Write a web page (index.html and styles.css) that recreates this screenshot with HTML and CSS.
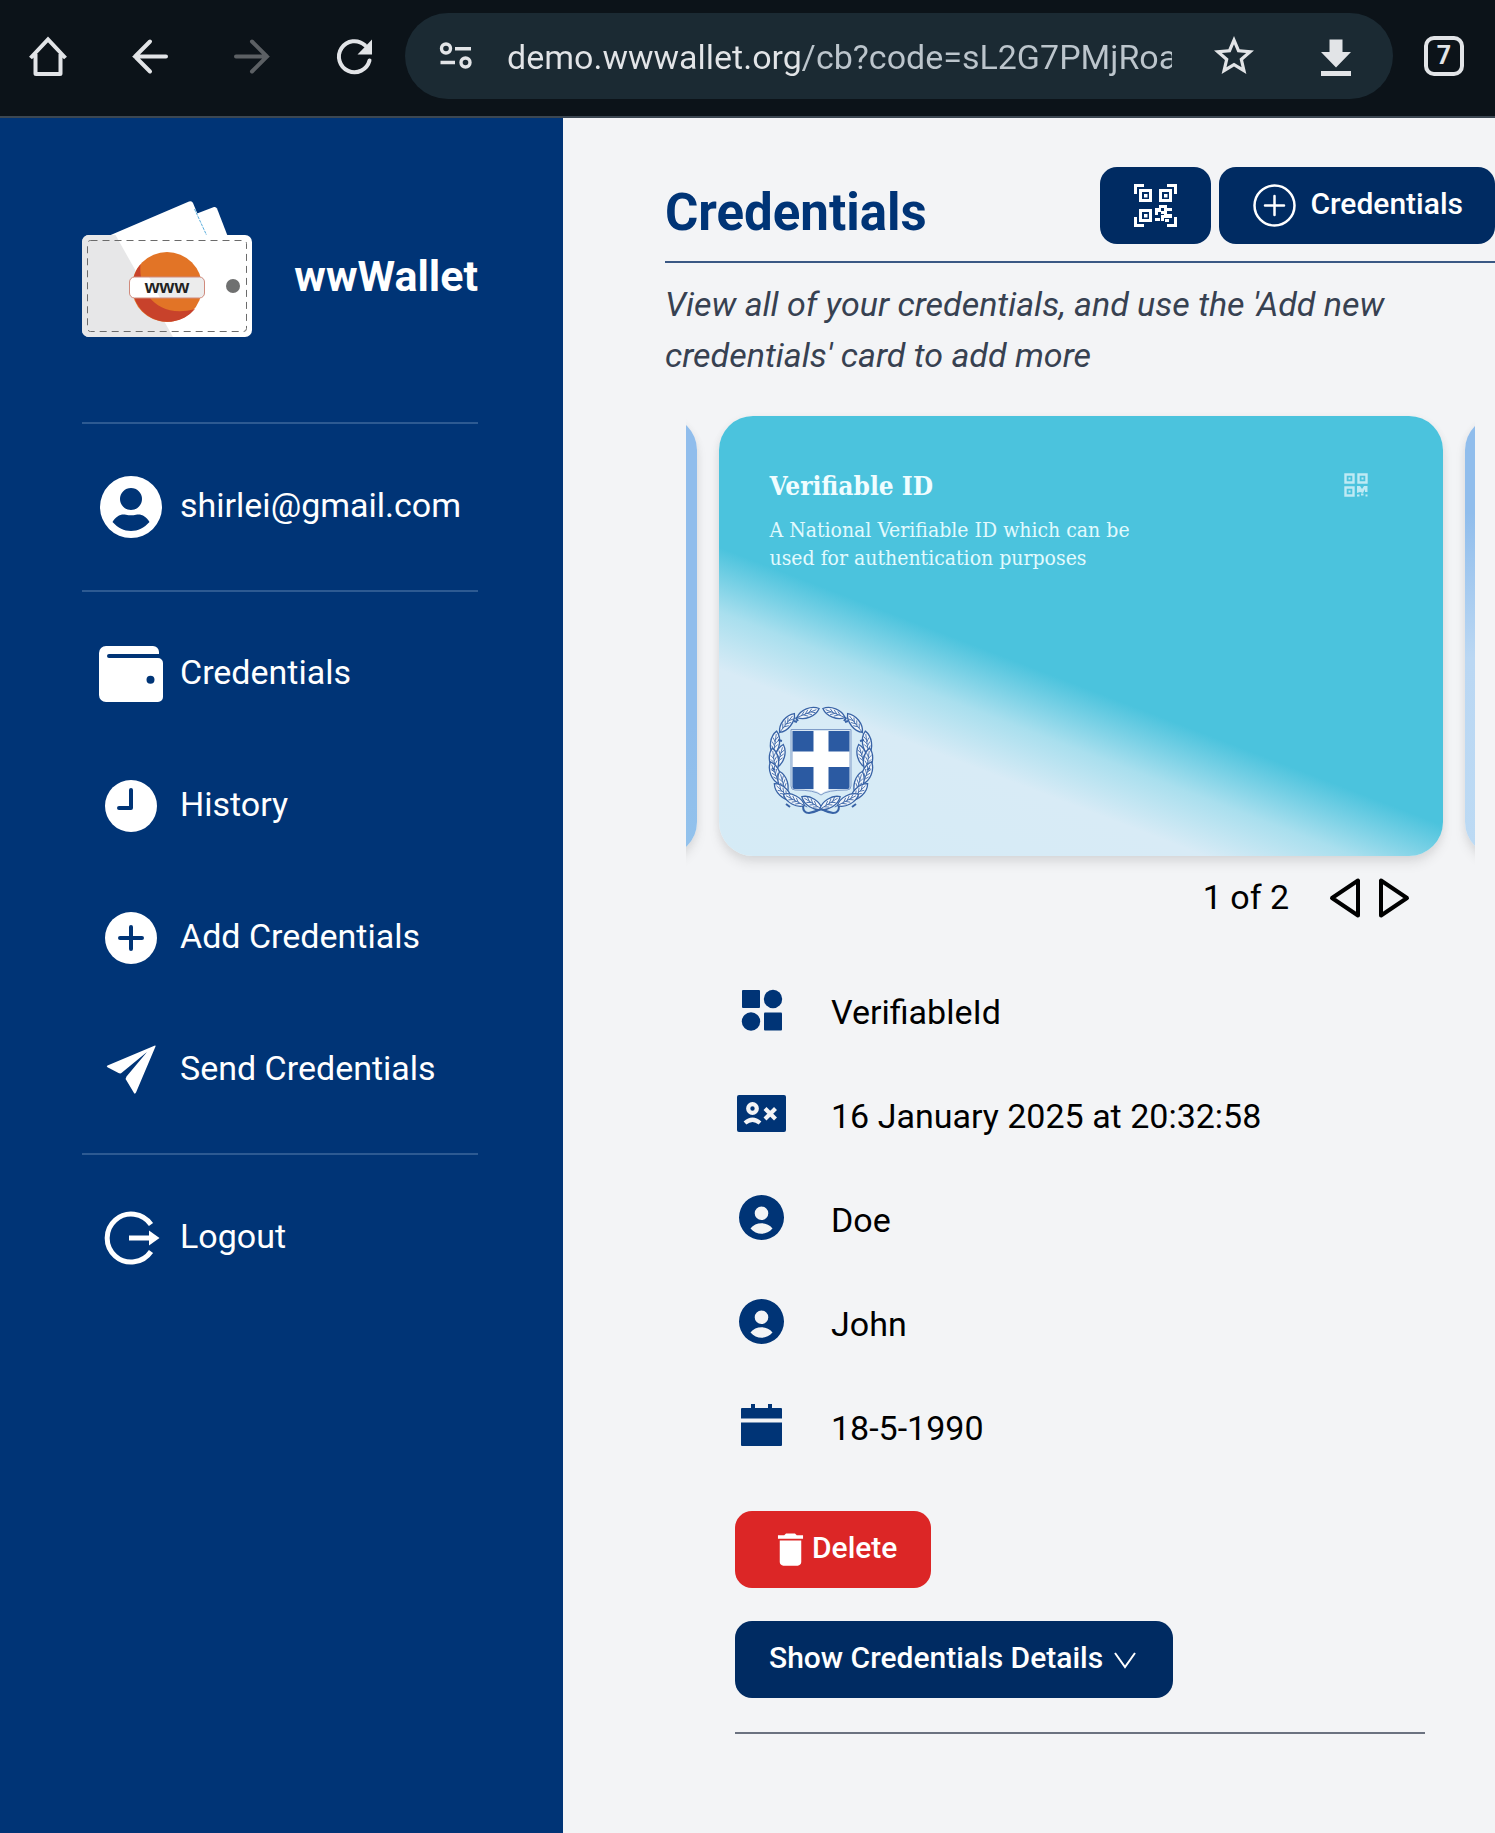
FILE: index.html
```html
<!DOCTYPE html>
<html lang="en">
<head>
<meta charset="utf-8">
<meta name="viewport" content="width=device-width, initial-scale=1">
<title>wwWallet</title>
<link rel="stylesheet" href="styles.css">
</head>
<body>
<header class="browser">
  <button class="tool" aria-label="Home"><svg viewBox="0 0 48 48" class="line"><path d="M6.500 26 24 7.500 41.500 26M11.500 22v19.500q0 .5.5.5h24q.5 0 .5-.5V22"/></svg></button>
  <button class="tool" aria-label="Back"><svg viewBox="0 0 48 48" class="line round"><path d="M40 24.500H9M24 9.500 9 24.500l15 15"/></svg></button>
  <button class="tool dim" aria-label="Forward" disabled><svg viewBox="0 0 48 48" class="line round"><path d="M8 24.500h31M24 9.500l15 15-15 15"/></svg></button>
  <button class="tool" aria-label="Reload"><svg viewBox="0 0 48 48"><path d="M39.500 28.500A15.500 15.500 0 1 1 35 13.300" fill="none" stroke="currentColor" stroke-width="4" stroke-linecap="round"/><path d="M42 7.500v15H27.500z"/></svg></button>
  <div class="omnibox">
    <button class="tune" aria-label="Site settings"><svg viewBox="0 0 34 34"><g fill="none" stroke="currentColor" stroke-width="3.400"><circle cx="7" cy="9.500" r="4.500"/><path d="M16 9.700h16M1.500 23.500H16"/><circle cx="26.500" cy="23.500" r="4.500"/></g></svg></button>
    <input class="url" type="text" aria-label="Address" value="demo.wwwallet.org/cb?code=sL2G7PMjRoabcd">
    <button class="tool" aria-label="Bookmark"><svg viewBox="0 0 24 24"><path d="M22 9.240l-7.190-.620L12 2 9.190 8.630 2 9.240l5.460 4.730L5.820 21 12 17.270 18.180 21l-1.630-7.030L22 9.240zM12 15.400l-3.760 2.270 1-4.280-3.320-2.880 4.380-.380L12 6.100l1.710 4.040 4.380.380-3.320 2.880 1 4.280L12 15.400z"/></svg></button>
    <button class="tool" aria-label="Download"><svg viewBox="0 0 48 48"><path d="M17.500 7.500h13V20H39L24 35.500 9 20h8.500zM9 39h30v5H9z"/></svg></button>
  </div>
  <button class="tool" aria-label="Tabs"><span class="tabs">7</span></button>
</header>

<div class="shell">
  <aside class="sidebar">
    <div class="brand">
      <svg class="logo" viewBox="0 0 170 150" aria-hidden="true">
        <path fill="#fff" d="M115 12.500 132 6q2-.5 3 1.500L146 36h-30z"/>
        <path fill="#fff" d="M24 36 107 .5q3-1 4 1.500L125 36z"/>
        <path fill="none" stroke="#5aaede" d="M112.500 8 124.500 34" stroke-dasharray="3 1"/>
        <rect y="34" width="170" height="102" rx="7" fill="#fff"/>
        <path fill="#e7e7e8" d="M7 34h26.500L91 136H7a7 7 0 0 1-7-7V41a7 7 0 0 1 7-7z"/>
        <rect x="5.500" y="39.500" width="159" height="91" rx="3" fill="none" stroke="#6b6b6b" stroke-dasharray="7 5"/>
        <circle cx="85" cy="86" r="35" fill="#e27426"/>
        <path fill="#c8422b" d="M58.500 63C56 92 76 118 113 108A35 35 0 1 1 58.500 63z"/>
        <rect x="47.500" y="76" width="75" height="21" rx="5" fill="#fff"/>
        <path fill="#ececec" d="M67 76h50.500a5 5 0 0 1 5 5v11a5 5 0 0 1-5 5H78z"/>
        <rect x="47.500" y="76" width="75" height="21" rx="5" fill="none" stroke="#d08a7c"/>
        <text class="logo-text" x="85" y="92" text-anchor="middle">www</text>
        <circle cx="151" cy="85" r="7" fill="#6f7070"/>
      </svg>
      <h2 class="brand-name">wwWallet</h2>
    </div>
    <div class="group">
      <div class="item"><svg viewBox="0 0 64 64"><path fill-rule="evenodd" d="M32 1a31 31 0 1 1 0 62 31 31 0 0 1 0-62zm0 12a11 11 0 1 0 0 22 11 11 0 0 0 0-22zM13.500 47C19 53 25 56 32 56s13-3 18.500-9C47 41 42 38.500 37 39.700q-5 1.200-10 0C22 38.500 17 41 13.500 47z"/></svg><span class="label">shirlei@gmail.com</span></div>
    </div>
    <nav class="group nav">
      <a class="item" href="#credentials"><svg viewBox="0 0 64 64"><path fill-rule="evenodd" d="M7 4h47a6 6 0 0 1 6 6v2H10a2 2 0 0 0 0 4h49a5 5 0 0 1 5 5v34a5 5 0 0 1-5 5H7a7 7 0 0 1-7-7V11a7 7 0 0 1 7-7zm44.500 29.700a4 4 0 1 0 0 8 4 4 0 0 0 0-8z"/></svg><span class="label">Credentials</span></a>
      <a class="item" href="#history"><svg viewBox="0 0 64 64"><circle cx="32" cy="32" r="26"/><path class="cut" d="M32 16v18H20"/></svg><span class="label">History</span></a>
      <a class="item" href="#add"><svg viewBox="0 0 64 64"><circle cx="32" cy="32" r="26"/><path class="cut" d="M32 21v22M21 32h22"/></svg><span class="label">Add Credentials</span></a>
      <a class="item" href="#send"><svg viewBox="0 0 64 64"><path d="M56 7.500 8.500 27.500q-1.500.8 0 1.700L19.500 35q2 1 3.500-.5L48 14 27.500 38.500q-1.500 2 0 4L35 55q1 1.500 2-.5L56.500 8.500q.3-1.200-.5-1z"/></svg><span class="label">Send Credentials</span></a>
    </nav>
    <div class="group last">
      <a class="item" href="#logout"><svg viewBox="0 0 64 64"><path fill="none" stroke="currentColor" stroke-width="5" d="M52 18.500a24 24 0 1 0 0 27M30 32h22"/><path d="M50 24.500 60.500 32 50 39.500z"/></svg><span class="label">Logout</span></a>
    </div>
  </aside>

  <main class="main">
    <div class="head">
      <h1 class="title">Credentials</h1>
      <div class="actions">
        <button class="btn" aria-label="Scan QR code"><svg class="icon43" viewBox="0 0 43 43"><path fill="none" stroke="currentColor" stroke-width="3" d="M1.500 10V1.500H10M33 1.500h8.500V10M41.500 33v8.500H33M10 41.500H1.500V33M6.500 6.500h10v10h-10zM26.500 6.500h10v10h-10zM6.500 26.500h10v10h-10z"/><path d="M10 10h3.500v3.500H10zM30 10h3.500v3.500H30zM10 30h3.500v3.500H10zM21 24h4v-3h5v3h-3v4h-3v3h-3zM30 21h3v3h5v3h-5v3h5v4h-8v-4h-3v-3h3zM21 34h5v3h-5zM27 31h3v6h-3zM31 35h4v3h-4z"/></svg></button>
        <button class="btn spaced"><svg class="icon43" viewBox="0 0 43 43"><g fill="none" stroke="currentColor" stroke-width="2.500" stroke-linecap="round"><circle cx="21.500" cy="21.500" r="20"/><path d="M21.500 12v19M12 21.500h19"/></g></svg><span class="label">Credentials</span></button>
      </div>
    </div>
    <p class="intro">View all of your credentials, and use the 'Add new credentials' card to add more</p>

    <section class="carousel" aria-label="Credential cards">
      <div class="card side"></div>
      <article class="card current">
        <div class="card-top">
          <div>
            <h3 class="card-title">Verifiable ID</h3>
            <p class="card-text">A National Verifiable ID which can be<br>used for authentication purposes</p>
          </div>
          <svg class="card-qr" viewBox="0 0 24 24" aria-hidden="true"><path fill="none" stroke="currentColor" stroke-width="2.400" d="M1.500 1.500h8v8h-8zM14.500 1.500h8v8h-8zM1.500 14.500h8v8h-8z"/><path d="M4.500 4.500h2v2h-2zM17.500 4.500h2v2h-2zM4.500 17.500h2v2h-2zM13 13h3l2 3 2-3h3.500v6H21v-3l-2 4-3-1-3 1zM13 21.500h2.500v2H13zM17 20.500h2.500v2H17zM21.500 21.500h2v2h-2z"/></svg>
        </div>
        <svg class="emblem" viewBox="0 0 102 108" aria-hidden="true">
          <defs>
            <g id="leaf"><path d="M0-12C6-6 6 6 0 12-6 6-6-6 0-12z" fill="#f1f6fb" stroke="#3863a6" stroke-width="1.300"/><path d="M0-9V15M0-3l2.500-4M0 1l3-4M0 5l3-4M0-1l-2.500-4M0 3l-3-4M0 7l-3-4" fill="none" stroke="#3863a6" stroke-width=".8"/></g>
            <g id="branch">
              <use href="#leaf" transform="translate(38 7) rotate(68)"/>
              <use href="#leaf" transform="translate(17 17) rotate(38)"/>
              <use href="#leaf" transform="translate(5 37) rotate(8)"/>
              <use href="#leaf" transform="translate(10 50) rotate(16)"/>
              <use href="#leaf" transform="translate(4 54) rotate(-8)"/>
              <use href="#leaf" transform="translate(5 67) rotate(-22)"/>
              <use href="#leaf" transform="translate(13 77) rotate(-16)"/>
              <use href="#leaf" transform="translate(13 86) rotate(-46)"/>
              <use href="#leaf" transform="translate(24 94) rotate(-62)"/>
              <use href="#leaf" transform="translate(42 97) rotate(-58)"/>
              <path d="M33 100q0 7 6 7 6-1 12-4M26 12l2 3M24 15l3 1M8 34l4 1M2 62l3 2M16 98l4 3" fill="none" stroke="#3863a6" stroke-width="2"/>
            </g>
          </defs>
          <use href="#branch"/>
          <use href="#branch" transform="translate(102 0) scale(-1 1)"/>
          <path fill="#d9e6f3" stroke="#7f9cc8" d="M21 23.500h60V80q0 4-4 4-20 0-26 5-6-5-26-5-4 0-4-4z"/>
          <path fill="#2b5aa2" d="M22.500 25h57v56q0 2-2 2H51h-26.500q-2 0-2-2z"/>
          <path fill="#fff" d="M43.500 25h15v20.500h21V61h-21v23q-5 1.500-7.500 4-2.500-2.500-7.500-4V61h-21V45.500h21z"/>
        </svg>
      </article>
      <div class="card side next"></div>
    </section>

    <div class="pager">
      <span>1 of 2</span>
      <div class="pager-arrows">
        <button class="arrow" aria-label="Previous"><svg viewBox="0 0 40 44"><path d="M33 4.500v35L7 22z"/></svg></button>
        <button class="arrow" aria-label="Next"><svg viewBox="0 0 40 44"><path d="M7 4.500v35L33 22z"/></svg></button>
      </div>
    </div>

    <div class="details">
      <table class="facts">
        <tr><th scope="row" aria-label="Type"><svg viewBox="0 0 53 53"><rect x="7" y="6" width="18" height="18" rx="1"/><circle cx="38" cy="15" r="9.200"/><circle cx="16" cy="37.500" r="9.200"/><rect x="29" y="28.500" width="18" height="18" rx="1"/></svg></th><td>VerifiableId</td></tr>
        <tr><th scope="row" aria-label="Expiration"><svg viewBox="0 0 53 53"><rect x="2" y="7" width="49" height="37" rx="2"/><g fill="none" stroke="#f3f4f6" stroke-width="4.200"><circle cx="17.500" cy="20.500" r="4.300"/><path d="M10 35q7.500-6.500 15 0M30 20.500l10.500 10.500M40.500 20.500l-10.500 10.500"/></g></svg></th><td>16 January 2025 at 20:32:58</td></tr>
        <tr><th scope="row" aria-label="Family name"><svg viewBox="0 0 53 53"><path fill-rule="evenodd" d="M26.500 3a22.500 22.500 0 1 1 0 45 22.500 22.500 0 0 1 0-45zm0 11.500a6.800 6.800 0 1 0 0 13.600 6.800 6.800 0 0 0 0-13.600zM15.500 36.500c6 7 16 7 22 0-5-7-17-7-22 0z"/></svg></th><td>Doe</td></tr>
        <tr><th scope="row" aria-label="First name"><svg viewBox="0 0 53 53"><path fill-rule="evenodd" d="M26.500 3a22.500 22.500 0 1 1 0 45 22.500 22.500 0 0 1 0-45zm0 11.500a6.800 6.800 0 1 0 0 13.600 6.800 6.800 0 0 0 0-13.600zM15.500 36.500c6 7 16 7 22 0-5-7-17-7-22 0z"/></svg></th><td>John</td></tr>
        <tr><th scope="row" aria-label="Date of birth"><svg viewBox="0 0 53 53"><path d="M6 9q0-1 1-1h9V4h4v4h13V4h4v4h9q1 0 1 1v9.500H6zM6 22.500h41V45q0 1-1 1H7q-1 0-1-1z"/></svg></th><td>18-5-1990</td></tr>
      </table>
      <button class="btn danger"><svg class="icon43" viewBox="0 0 24 24"><path d="M6 19c0 1.100.9 2 2 2h8c1.100 0 2-.9 2-2V7H6v12zM19 4h-3.500l-1-1h-5l-1 1H5v2h14V4z"/></svg><span class="label">Delete</span></button>
      <button class="btn more"><span class="label">Show Credentials Details</span><svg class="chevron" viewBox="0 0 28 28"><path d="M4 7l10 14L24 7" fill="none" stroke="currentColor" stroke-width="2"/></svg></button>
      <hr class="rule">
    </div>
  </main>
</div>
</body>
</html>
```

FILE: styles.css
```css
* { box-sizing: border-box; }

body {
  margin: 0;
  min-height: 100vh;
  display: flex;
  flex-direction: column;
  font-family: Roboto, "Liberation Sans", sans-serif;
  font-size: 34px;
  line-height: 51px;
  color: #000;
  background: #f3f4f6;
  overflow-x: hidden;
}

h1, h2, h3, p { margin: 0; }

button {
  margin: 0;
  padding: 0;
  border: 0;
  background: none;
  color: inherit;
  font: inherit;
}

svg { display: block; flex: none; fill: currentColor; }

/* Browser bar */
.browser {
  display: flex;
  align-items: center;
  gap: 34px;
  padding: 13px 17px 17px 14px;
  border-bottom: 2px solid #3c4752;
  background: #0c1319;
  color: #e2e4e7;
}

.tool {
  flex: none;
  width: 68px;
  height: 68px;
  display: flex;
  align-items: center;
  justify-content: center;
}

.tool svg { width: 48px; height: 48px; }
.dim { color: #5c6064; }
.line { fill: none; stroke: currentColor; stroke-width: 4; }
.round { stroke-linecap: round; }

.omnibox {
  flex: 1;
  min-width: 0;
  height: 86px;
  margin: 0 -17px;
  padding: 0 23px 0 34px;
  display: flex;
  align-items: center;
  gap: 34px;
  border-radius: 43px;
  background: #1b2a33;
}

.tune svg { width: 34px; height: 34px; }

.url {
  flex: 1;
  min-width: 0;
  height: 51px;
  margin-right: -6px;
  padding: 2px 0 0;
  border: 0;
  font: inherit;
  color: transparent;
  background: linear-gradient(90deg, #e2e4e7 296px, #bcc5cc 296px);
  -webkit-background-clip: text;
  background-clip: text;
}

.tabs {
  width: 40px;
  height: 40px;
  display: grid;
  place-items: center;
  border: 4px solid currentColor;
  border-radius: 10px;
  font-size: 25px;
  font-weight: 700;
  line-height: 32px;
}

/* Layout */
.shell { flex: 1; display: flex; }

.sidebar {
  flex: none;
  width: 563px;
  padding: 0 85px 0 82px;
  background: #003476;
  color: #fff;
}

.brand {
  display: flex;
  align-items: center;
  justify-content: space-between;
  padding: 83px 0 71px;
  border-bottom: 2px solid #2d5a92;
}

.logo { width: 170px; height: 150px; }
.logo-text { font: 700 19px "Liberation Sans", sans-serif; fill: #222; }
.brand-name { font-size: 43px; font-weight: 700; }

.group { padding: 17px 0; border-bottom: 2px solid #2d5a92; }
.nav { padding-top: 16px; }
.last { border-bottom: 0; }

.item {
  height: 132px;
  padding-left: 17px;
  display: flex;
  align-items: center;
  gap: 17px;
  color: inherit;
  text-decoration: none;
  white-space: nowrap;
}

.item svg { width: 64px; height: 64px; }
.label { padding-bottom: 4px; }
.cut { fill: none; stroke: #003476; stroke-width: 4; stroke-linecap: round; stroke-linejoin: round; }

.main { flex: 1; min-width: 0; padding: 49px 0 99px 102px; }

.head {
  display: flex;
  align-items: flex-end;
  justify-content: space-between;
  padding-bottom: 17px;
  border-bottom: 2px solid #3a5884;
}

.title { font-size: 51px; line-height: 62px; font-weight: 700; color: #003476; }
.actions { display: flex; gap: 8px; }

.btn {
  height: 77px;
  padding: 0 34px;
  display: flex;
  align-items: center;
  border-radius: 17px;
  background: #002b62;
  color: #fff;
  font-size: 30px;
  font-weight: 500;
  white-space: nowrap;
}

.spaced { gap: 14px; padding-right: 32px; }
.icon43 { width: 43px; height: 43px; }

.intro {
  padding: 16px 34px 35px 0;
  font-style: italic;
  color: #374151;
}

/* Cards */
.carousel {
  display: flex;
  justify-content: center;
  gap: 22px;
  margin: 0 20px 0 21px;
  overflow-x: clip;
}

.card {
  flex: none;
  width: calc(100% - 65px);
  aspect-ratio: 724 / 440;
  border-radius: 34px;
  box-shadow: 0 8px 12px rgba(0, 0, 0, .08), 0 2px 8px rgba(0, 0, 0, .06);
}

.side { background: linear-gradient(#90bdec, #90bdec 70%, #92c2ec); }
.next { background: linear-gradient(#90bdec 22%, #bad7f3 55%, #bcdaf4); }

.current {
  display: flex;
  flex-direction: column;
  justify-content: space-between;
  padding: 50px 75px 42px 51px;
  background: linear-gradient(201deg, #4bc3dd 57%, #a9dfee 66%, #d8ebf6 74%, #d5ebf6);
  color: #f0fdff;
}

.card-top { display: flex; justify-content: space-between; }
.card-title, .card-text { font-family: "Roboto Slab", "DejaVu Serif Condensed", "DejaVu Serif", serif; }
.card-title { font-size: 26px; line-height: 40px; font-weight: 700; }
.card-text { margin-top: 10px; font-size: 21px; line-height: 28px; color: #e2fafd; }
.card-qr { width: 24px; height: 24px; margin-top: 7px; color: #bfeaf4; }
.emblem { width: 102px; height: 108px; overflow: visible; }

.pager {
  display: flex;
  align-items: center;
  justify-content: flex-end;
  gap: 36px;
  padding: 16px 81px 35px 0;
}

.pager-arrows { display: flex; gap: 9px; }
.arrow svg { width: 40px; height: 44px; fill: none; stroke: #000; stroke-width: 4; stroke-linejoin: round; }

/* Details */
.details { padding: 0 70px; }
.facts { border-collapse: collapse; }
.facts tr { height: 104px; }
.facts th { width: 96px; padding: 0; color: #003476; }
.facts td { padding: 4px 0 0; }
.facts svg { width: 53px; height: 53px; }
.danger { margin-top: 33px; }
.danger { background: #dc2626; }
.more { margin: 33px 0 34px; gap: 8px; }
.chevron { width: 28px; height: 28px; }
.rule { margin: 0; border: 0; border-top: 2px solid #6b7280; }
```
